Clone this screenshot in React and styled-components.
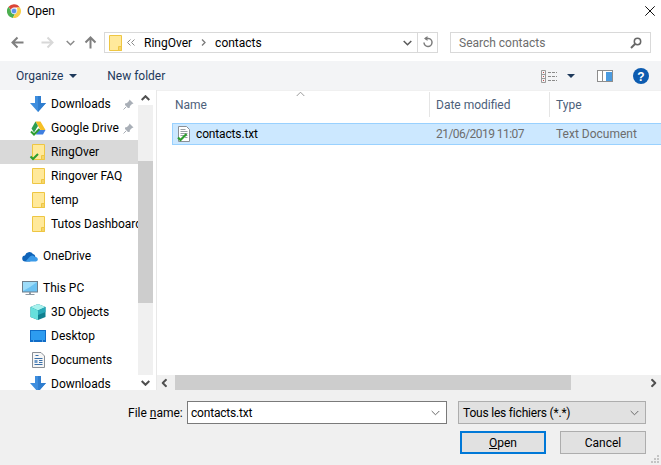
import React from 'react';
import styled, { createGlobalStyle } from 'styled-components';

const GlobalStyle = createGlobalStyle`
  html, body {
    margin: 0;
    padding: 0;
    background: #fff;
  }
  * {
    box-sizing: border-box;
  }
`;

function ChromeIcon() {
  return (
    <svg width="14" height="14" viewBox="0 0 14 14">
      <path d="M7 0.200a6.800 6.800 0 0 1 5.900 3.400H7a3.400 3.400 0 0 0-3.200 2.300L1.600 2.700A6.800 6.800 0 0 1 7 0.200z" fill="#db4437" />
      <path d="M1.600 2.700l3 5.100a3.400 3.400 0 0 0 3.300 2.500l-2.100 3.600A6.800 6.800 0 0 1 1.600 2.700z" fill="#4caf50" />
      <path d="M12.900 3.600A6.800 6.800 0 0 1 5.800 13.900l3-5.200A3.400 3.400 0 0 0 9.500 3.600z" fill="#f8cf4a" />
      <circle cx="7" cy="7" r="2.800" fill="#5a92ea" stroke="#e8eef8" strokeWidth="0.800" />
    </svg>
  );
}

function FolderIcon({ checked }) {
  return (
    <svg width="13" height="16" viewBox="0 0 13 16" style={{ overflow: 'visible' }}>
      <path d="M0.500 0.500h12v15h-12z" fill="#ffe99b" stroke="#eec643" />
      <path d="M9.500 11.500h3v4h-3z" fill="#f5d56a" stroke="#eec643" />
      {checked && <path d="M-1.500 12.500l2.500 2.500 5-5" fill="none" stroke="#2f9e2f" strokeWidth="2" />}
    </svg>
  );
}

function DownloadIcon() {
  return (
    <svg width="16" height="16" viewBox="0 0 16 16">
      <path d="M5 0h6v7h5l-8 9-8-9h5z" fill="#3f8ede" />
      <path d="M8 0h3v7h5l-8 9z" fill="#2f7dcf" />
    </svg>
  );
}

function DriveIcon() {
  return (
    <svg width="16" height="15" viewBox="0 0 16 15">
      <path d="M5.500 0.500h5l5 8.500h-5z" fill="#f6c026" />
      <path d="M5.500 0.500L8 5 4 11.500 1.500 7.500z" fill="#2f9e50" />
      <path d="M7 9h8.500L13 13.500H6z" fill="#3f7fe0" />
      <path d="M1 10.500l3 3 5.500-5.500" fill="none" stroke="#2f9e2f" strokeWidth="2" />
    </svg>
  );
}

function PinIcon() {
  return (
    <svg width="11" height="11" viewBox="0 0 11 11">
      <path d="M6.500 0.500l4 4-1.500 0.500-2 2-0.500 2-1.500 0-3-3 0-1.500 2-0.500 2-2z" fill="#a9afb7" />
      <path d="M3 8L0.500 10.500" stroke="#a9afb7" strokeWidth="1" />
    </svg>
  );
}

function CloudIcon() {
  return (
    <svg width="16" height="11" viewBox="0 0 16 11">
      <path d="M3.500 10.500a3 3 0 0 1-.5-6A4.500 4.500 0 0 1 11 3a3.500 3.500 0 0 1 2.500 3.500L8 10.500z" fill="#0f63b8" />
      <path d="M3.500 10.500L8 5.500a3.500 3.500 0 0 1 5 .5 2.300 2.300 0 0 1 1 4.500z" fill="#3b9ae8" />
    </svg>
  );
}

function MonitorIcon() {
  return (
    <svg width="16" height="15" viewBox="0 0 16 15">
      <rect x="0.500" y="0.500" width="15" height="10.500" fill="#6cc2f2" stroke="#6f7f8c" />
      <path d="M1 1h14L8 6 1 10z" fill="#9ddcf9" />
      <path d="M7 11h2v2H7z" fill="#8d99a3" />
      <path d="M3.500 13.500h9" stroke="#8d99a3" />
    </svg>
  );
}

function CubeIcon() {
  return (
    <svg width="16" height="16" viewBox="0 0 16 16">
      <path d="M8 0L15.500 3v10L8 16 0.500 13V3z" fill="#10808f" />
      <path d="M0.500 3L8 0l7.500 3L8 6.500z" fill="#a8f2ee" />
      <path d="M0.500 3L8 6.500V16L0.500 13z" fill="#66e0dc" />
      <path d="M8 6.500L15.500 3v5L8 11z" fill="#27a9b8" />
    </svg>
  );
}

function DesktopIcon() {
  return (
    <svg width="16" height="12" viewBox="0 0 16 12">
      <rect x="0" y="0" width="16" height="12" fill="#0f6cc7" />
      <rect x="1" y="1" width="14" height="9" fill="#2d9cf0" />
      <path d="M3 11h1M12 11h1" stroke="#a8d8f8" />
    </svg>
  );
}

function DocumentsIcon() {
  return (
    <svg width="13" height="16" viewBox="0 0 13 16">
      <path d="M0.500 0.500h8.500l3.500 3.500v11.500H0.500z" fill="#f6f6f6" stroke="#8a8f96" />
      <path d="M3.500 3.500h3M2.500 6.500h8M7 8.500h3.500M7 10.500h3.500M2.500 12.500h8" stroke="#3a6fa8" />
      <path d="M2.500 8h3v3h-3z" fill="#6f9ac8" />
    </svg>
  );
}

function TextFileIcon() {
  return (
    <svg width="14" height="16" viewBox="0 0 14 16">
      <path d="M1.500 0.500h8l3 3v12h-11z" fill="#fff" stroke="#8a8f96" />
      <path d="M3.500 3.500h5M3.500 5.500h7M3.500 7.500h7M3.500 9.500h7M8 11.500h2.500" stroke="#9aa0a6" />
      <path d="M1 11.500l2.500 2.500 6-6" fill="none" stroke="#2f9e2f" strokeWidth="2.200" />
    </svg>
  );
}

function ArrowIcon({ dir, color }) {
  const rotate = { left: 0, right: 180, up: 90 }[dir];
  return (
    <svg width="13" height="13" viewBox="0 0 13 13" style={{ transform: `rotate(${rotate}deg)` }}>
      <path d="M12.500 6.500H2M6.500 1.500l-5 5 5 5" fill="none" stroke={color} strokeWidth="2" />
    </svg>
  );
}

function Chevron({ dir = 'down', color = '#5a5a5a', weight = 1.500 }) {
  const rotate = { down: 0, up: 180, left: 90, right: -90 }[dir];
  return (
    <svg width="9" height="6" viewBox="0 0 9 6" style={{ transform: `rotate(${rotate}deg)` }}>
      <path d="M0.700 1l3.800 3.800L8.300 1" fill="none" stroke={color} strokeWidth={weight} />
    </svg>
  );
}

function DoubleChevron() {
  return (
    <svg width="8" height="7" viewBox="0 0 8 7">
      <path d="M3.500 0.500l-3 3 3 3M7.500 0.500l-3 3 3 3" fill="none" stroke="#8a8a8a" strokeWidth="1" />
    </svg>
  );
}

function SmallChevron() {
  return (
    <svg width="5" height="7" viewBox="0 0 5 7">
      <path d="M1 0.500l3 3-3 3" fill="none" stroke="#7a7a7a" strokeWidth="1.300" />
    </svg>
  );
}

function RefreshIcon() {
  return (
    <svg width="11" height="13" viewBox="0 0 11 13">
      <path d="M3 2.500h3.500a4 4 0 1 1-4.500 4" fill="none" stroke="#7c7c7c" strokeWidth="1.500" />
      <path d="M5.500 0L2 2.500 5.500 5z" fill="#7c7c7c" />
    </svg>
  );
}

function SearchIcon() {
  return (
    <svg width="12" height="12" viewBox="0 0 12 12">
      <circle cx="7.500" cy="4.500" r="3.200" fill="none" stroke="#666" strokeWidth="1.500" />
      <path d="M5 7L1 11" stroke="#666" strokeWidth="2" />
    </svg>
  );
}

function ViewIcon() {
  return (
    <svg width="17" height="13" viewBox="0 0 17 13">
      <path d="M0.500 0.500h4v12h-4zM0.500 4.500h4M0.500 8.500h4" fill="none" stroke="#9a9a9a" />
      <path d="M2 2.500h1M2 6.500h1M2 10.500h1" stroke="#c0504d" />
      <path d="M7 2.500h9M7 6.500h9M7 10.500h9" stroke="#8a8a8a" strokeDasharray="3 1" />
    </svg>
  );
}

function PaneIcon() {
  return (
    <svg width="16" height="12" viewBox="0 0 16 12">
      <rect x="0.500" y="0.500" width="15" height="11" fill="#fff" stroke="#8d8d8d" />
      <path d="M5.500 1v10" stroke="#8d8d8d" />
      <rect x="9" y="2" width="6" height="9" fill="#4a9be0" />
    </svg>
  );
}

function HelpIcon() {
  return (
    <svg width="16" height="16" viewBox="0 0 16 16">
      <circle cx="8" cy="8" r="8" fill="#0d5bb0" />
      <text x="8" y="12.500" textAnchor="middle" fontFamily="Liberation Sans, sans-serif" fontWeight="700" fontSize="12" fill="#fff">?</text>
    </svg>
  );
}

function CloseIcon() {
  return (
    <svg width="10" height="10" viewBox="0 0 10 10">
      <path d="M0.300 0.300l9.400 9.400M9.700 0.300L0.300 9.700" stroke="#111" strokeWidth="1" />
    </svg>
  );
}

function GripIcon() {
  return (
    <svg width="11" height="11" viewBox="0 0 11 11">
      <path d="M8 2h2v2H8zM5 5h2v2H5zM8 5h2v2H8zM2 8h2v2H2zM5 8h2v2H5zM8 8h2v2H8z" fill="#c4c4c4" />
    </svg>
  );
}

const quickAccess = [
  { label: 'Downloads', icon: <DownloadIcon />, pinned: true },
  { label: 'Google Drive', icon: <DriveIcon />, pinned: true },
  { label: 'RingOver', icon: <FolderIcon checked />, selected: true },
  { label: 'Ringover FAQ', icon: <FolderIcon /> },
  { label: 'temp', icon: <FolderIcon /> },
  { label: 'Tutos Dashboard', icon: <FolderIcon /> },
];

const thisPc = [
  { label: '3D Objects', icon: <CubeIcon /> },
  { label: 'Desktop', icon: <DesktopIcon /> },
  { label: 'Documents', icon: <DocumentsIcon /> },
  { label: 'Downloads', icon: <DownloadIcon /> },
];

function NavRow({ item }) {
  return (
    <TreeRow $selected={item.selected}>
      <TreeIcon>{item.icon}</TreeIcon>
      <TreeLabel>{item.label}</TreeLabel>
      {item.pinned && <PinSlot><PinIcon /></PinSlot>}
    </TreeRow>
  );
}

export default function App() {
  return (
    <Dialog>
      <GlobalStyle />
      <TitleBar>
        <ChromeIcon />
        <TitleText>Open</TitleText>
        <CloseButton><CloseIcon /></CloseButton>
      </TitleBar>

      <NavBar>
        <NavButtons>
          <ArrowIcon dir="left" color="#7f7f7f" />
          <ForwardSlot><ArrowIcon dir="right" color="#d8d8d8" /></ForwardSlot>
          <HistorySlot><Chevron color="#8a8a8a" /></HistorySlot>
          <UpSlot><ArrowIcon dir="up" color="#7f7f7f" /></UpSlot>
        </NavButtons>
        <AddressBox>
          <FolderIcon />
          <Crumbs>
            <DoubleChevron />
            <Crumb>RingOver</Crumb>
            <SmallChevron />
            <Crumb>contacts</Crumb>
          </Crumbs>
          <AddressChevron><Chevron /></AddressChevron>
          <RefreshSlot><RefreshIcon /></RefreshSlot>
        </AddressBox>
        <SearchBox>
          <SearchText>Search contacts</SearchText>
          <SearchIcon />
        </SearchBox>
      </NavBar>

      <Toolbar>
        <ToolText>Organize</ToolText>
        <Caret />
        <NewFolder>New folder</NewFolder>
        <ToolRight>
          <ViewIcon />
          <ViewCaret />
          <PaneSlot><PaneIcon /></PaneSlot>
          <HelpSlot><HelpIcon /></HelpSlot>
        </ToolRight>
      </Toolbar>

      <Body>
        <Sidebar>
          <Tree>
            {quickAccess.map((item) => <NavRow key={item.label} item={item} />)}
            <RootRow>
              <CloudIcon />
              <TreeLabel>OneDrive</TreeLabel>
            </RootRow>
            <RootRow>
              <MonitorIcon />
              <TreeLabel>This PC</TreeLabel>
            </RootRow>
            {thisPc.map((item) => <NavRow key={item.label} item={item} />)}
          </Tree>
          <VScroll>
            <VScrollEnd><Chevron dir="up" color="#505050" weight={2} /></VScrollEnd>
            <VThumb />
            <VScrollEnd><Chevron color="#505050" weight={2} /></VScrollEnd>
          </VScroll>
        </Sidebar>

        <FilePane>
          <ColumnHeader>
            <SortCaret><Chevron dir="up" color="#9a9a9a" weight={1} /></SortCaret>
            <NameHead>Name</NameHead>
            <DateHead>Date modified</DateHead>
            <TypeHead>Type</TypeHead>
          </ColumnHeader>
          <FileList>
            <FileRow>
              <FileName>
                <TextFileIcon />
                <FileNameText>contacts.txt</FileNameText>
              </FileName>
              <FileDate>21/06/2019 11:07</FileDate>
              <FileType>Text Document</FileType>
            </FileRow>
          </FileList>
          <HScroll>
            <HScrollEnd><Chevron dir="left" color="#505050" weight={2} /></HScrollEnd>
            <HThumb />
            <HScrollEnd><Chevron dir="right" color="#505050" weight={2} /></HScrollEnd>
          </HScroll>
        </FilePane>
      </Body>

      <Footer>
        <NameLine>
          <FieldLabel>File <u>n</u>ame:</FieldLabel>
          <NameInput>
            <InputText>contacts.txt</InputText>
            <Chevron color="#6a6a6a" weight={1} />
          </NameInput>
          <TypeSelect>
            <InputText>Tous les fichiers (*.*)</InputText>
            <Chevron color="#6a6a6a" weight={1} />
          </TypeSelect>
        </NameLine>
        <ButtonLine>
          <Button $primary><u>O</u>pen</Button>
          <Button>Cancel</Button>
        </ButtonLine>
        <Grip><GripIcon /></Grip>
      </Footer>
    </Dialog>
  );
}

const Dialog = styled.div`
  position: relative;
  display: flex;
  flex-direction: column;
  width: 661px;
  height: 465px;
  overflow: hidden;
  background: #fff;
  color: #000;
  font: 12px/16px Roboto, 'Noto Sans', sans-serif;
`;

const TitleBar = styled.div`
  display: flex;
  align-items: center;
  flex: 0 0 22px;
  padding: 0 7px;
`;

const TitleText = styled.span`
  margin-left: 6px;
`;

const CloseButton = styled.div`
  display: flex;
  margin-left: auto;
  margin-right: -1px;
`;

const NavBar = styled.div`
  display: flex;
  align-items: flex-start;
  flex: 0 0 39px;
  padding: 10px 10px 0 11px;
`;

const NavButtons = styled.div`
  display: flex;
  align-items: center;
  width: 93px;
  height: 21px;
`;

const ForwardSlot = styled.div`
  display: flex;
  margin-left: 17px;
`;

const HistorySlot = styled.div`
  display: flex;
  margin-left: 12px;
`;

const UpSlot = styled.div`
  display: flex;
  margin-left: 9px;
`;

const AddressBox = styled.div`
  display: flex;
  align-items: center;
  width: 334px;
  height: 21px;
  padding-left: 4px;
  border: 1px solid #d9d9d9;
`;

const Crumbs = styled.div`
  display: flex;
  align-items: center;
  flex: 1;
  margin-left: 5px;
  gap: 9px;
`;

const Crumb = styled.span``;

const AddressChevron = styled.div`
  display: flex;
  margin-right: 5px;
`;

const RefreshSlot = styled.div`
  display: flex;
  align-items: center;
  justify-content: center;
  width: 20px;
  height: 100%;
  border-left: 1px solid #d9d9d9;
`;

const SearchBox = styled.div`
  display: flex;
  align-items: center;
  justify-content: space-between;
  width: 201px;
  height: 21px;
  margin-left: 12px;
  padding: 0 8px;
  border: 1px solid #d9d9d9;
`;

const SearchText = styled.span`
  color: #6d6d6d;
`;

const Toolbar = styled.div`
  display: flex;
  align-items: center;
  flex: 0 0 29px;
  padding: 1px 12px 0 16px;
  background: #f3f4f6;
`;

const ToolText = styled.span`
  color: #1e395b;
`;

const Caret = styled.div`
  width: 0;
  height: 0;
  margin-left: 6px;
  border-left: 4px solid transparent;
  border-right: 4px solid transparent;
  border-top: 4px solid #1e395b;
`;

const NewFolder = styled.span`
  margin-left: 30px;
  color: #1e395b;
`;

const ToolRight = styled.div`
  display: flex;
  align-items: center;
  margin-left: auto;
`;

const ViewCaret = styled(Caret)`
  margin-left: 9px;
`;

const PaneSlot = styled.div`
  display: flex;
  margin-left: 22px;
`;

const HelpSlot = styled.div`
  display: flex;
  margin-left: 20px;
`;

const Body = styled.div`
  display: flex;
  flex: 0 0 300px;
  min-height: 0;
`;

const Sidebar = styled.div`
  display: flex;
  flex: 0 0 157px;
  border-right: 1px solid #e8e8e8;
  padding-right: 3px;
`;

const Tree = styled.div`
  flex: 0 0 138px;
  padding-top: 2px;
  overflow: hidden;
`;

const TreeRow = styled.div`
  display: flex;
  align-items: center;
  height: 24px;
  padding-left: 30px;
  white-space: nowrap;
  overflow: hidden;
  background: ${(p) => (p.$selected ? '#d9d9d9' : 'transparent')};
`;

const RootRow = styled(TreeRow)`
  margin-top: 8px;
  padding-left: 22px;
`;

const TreeIcon = styled.span`
  display: flex;
  align-items: center;
  justify-content: center;
  flex: 0 0 16px;
`;

const TreeLabel = styled.span`
  flex-shrink: 0;
  margin-left: 5px;
`;

const PinSlot = styled.span`
  display: flex;
  margin-left: auto;
  margin-right: 4px;
`;

const VScroll = styled.div`
  display: flex;
  flex-direction: column;
  flex: 0 0 15px;
  background: #f0f0f0;
`;

const VScrollEnd = styled.div`
  display: flex;
  align-items: center;
  justify-content: center;
  flex: 0 0 15px;
  background: #fff;
`;

const VThumb = styled.div`
  flex: 0 0 142px;
  margin-top: 56px;
  margin-bottom: auto;
  background: #cdcdcd;
`;

const FilePane = styled.div`
  display: flex;
  flex-direction: column;
  flex: 1;
  min-width: 0;
`;

const ColumnHeader = styled.div`
  position: relative;
  display: flex;
  flex: 0 0 27px;
  padding-top: 1px;
  border-top: 1px solid #f0f0f0;
  color: #4c607a;
`;

const SortCaret = styled.div`
  position: absolute;
  left: 139px;
  top: 0;
  display: flex;
`;

const HeadCell = styled.div`
  display: flex;
  align-items: center;
  height: 25px;
  padding-top: 1px;
  border-right: 1px solid #e5e5e5;
`;

const NameHead = styled(HeadCell)`
  width: 273px;
  padding-left: 18px;
`;

const DateHead = styled(HeadCell)`
  width: 120px;
  padding-left: 6px;
`;

const TypeHead = styled(HeadCell)`
  flex: 1;
  padding-left: 6px;
  border-right: 0;
`;

const FileList = styled.div`
  flex: 1;
  padding: 6px 0 0 15px;
`;

const FileRow = styled.div`
  display: flex;
  align-items: center;
  height: 22px;
  margin-right: -1px;
  background: #cce8ff;
  border: 1px solid #99d1ff;
  color: #6d6d6d;
`;

const FileName = styled.div`
  display: flex;
  align-items: center;
  width: 263px;
  padding-left: 4px;
  color: #000;
`;

const FileNameText = styled.span`
  margin-left: 5px;
  letter-spacing: -0.15px;
`;

const FileDate = styled.div`
  width: 120px;
  letter-spacing: -0.55px;
`;

const FileType = styled.div``;

const HScroll = styled.div`
  display: flex;
  flex: 0 0 15px;
  background: #f0f0f0;
`;

const HScrollEnd = styled.div`
  display: flex;
  align-items: center;
  justify-content: center;
  flex: 0 0 15px;
  background: #f0f0f0;
`;

const HThumb = styled.div`
  flex: 0 0 396px;
  margin-right: auto;
  margin-left: 3px;
  background: #cdcdcd;
`;

const Footer = styled.div`
  position: relative;
  display: flex;
  flex-direction: column;
  flex: 1;
  background: #f0f0f0;
`;

const NameLine = styled.div`
  display: flex;
  align-items: center;
  margin-top: 11px;
  padding-left: 128px;
`;

const FieldLabel = styled.label`
  width: 59px;
`;

const InputText = styled.span`
  letter-spacing: -0.2px;
`;

const NameInput = styled.div`
  display: flex;
  align-items: center;
  justify-content: space-between;
  width: 260px;
  height: 23px;
  padding: 0 6px 0 3px;
  background: #fff;
  border: 1px solid #7a7a7a;
`;

const TypeSelect = styled.div`
  display: flex;
  align-items: center;
  justify-content: space-between;
  width: 188px;
  height: 23px;
  margin-left: 11px;
  padding: 0 6px 0 4px;
  background: #e1e1e1;
  border: 1px solid #adadad;
`;

const ButtonLine = styled.div`
  display: flex;
  justify-content: flex-end;
  gap: 14px;
  margin-top: 7px;
  padding-right: 15px;
`;

const Button = styled.div`
  display: flex;
  align-items: center;
  justify-content: center;
  width: 86px;
  height: 23px;
  background: #e1e1e1;
  border: ${(p) => (p.$primary ? '2px solid #0078d7' : '1px solid #adadad')};
`;

const Grip = styled.div`
  position: absolute;
  right: 1px;
  bottom: 1px;
  display: flex;
`;
